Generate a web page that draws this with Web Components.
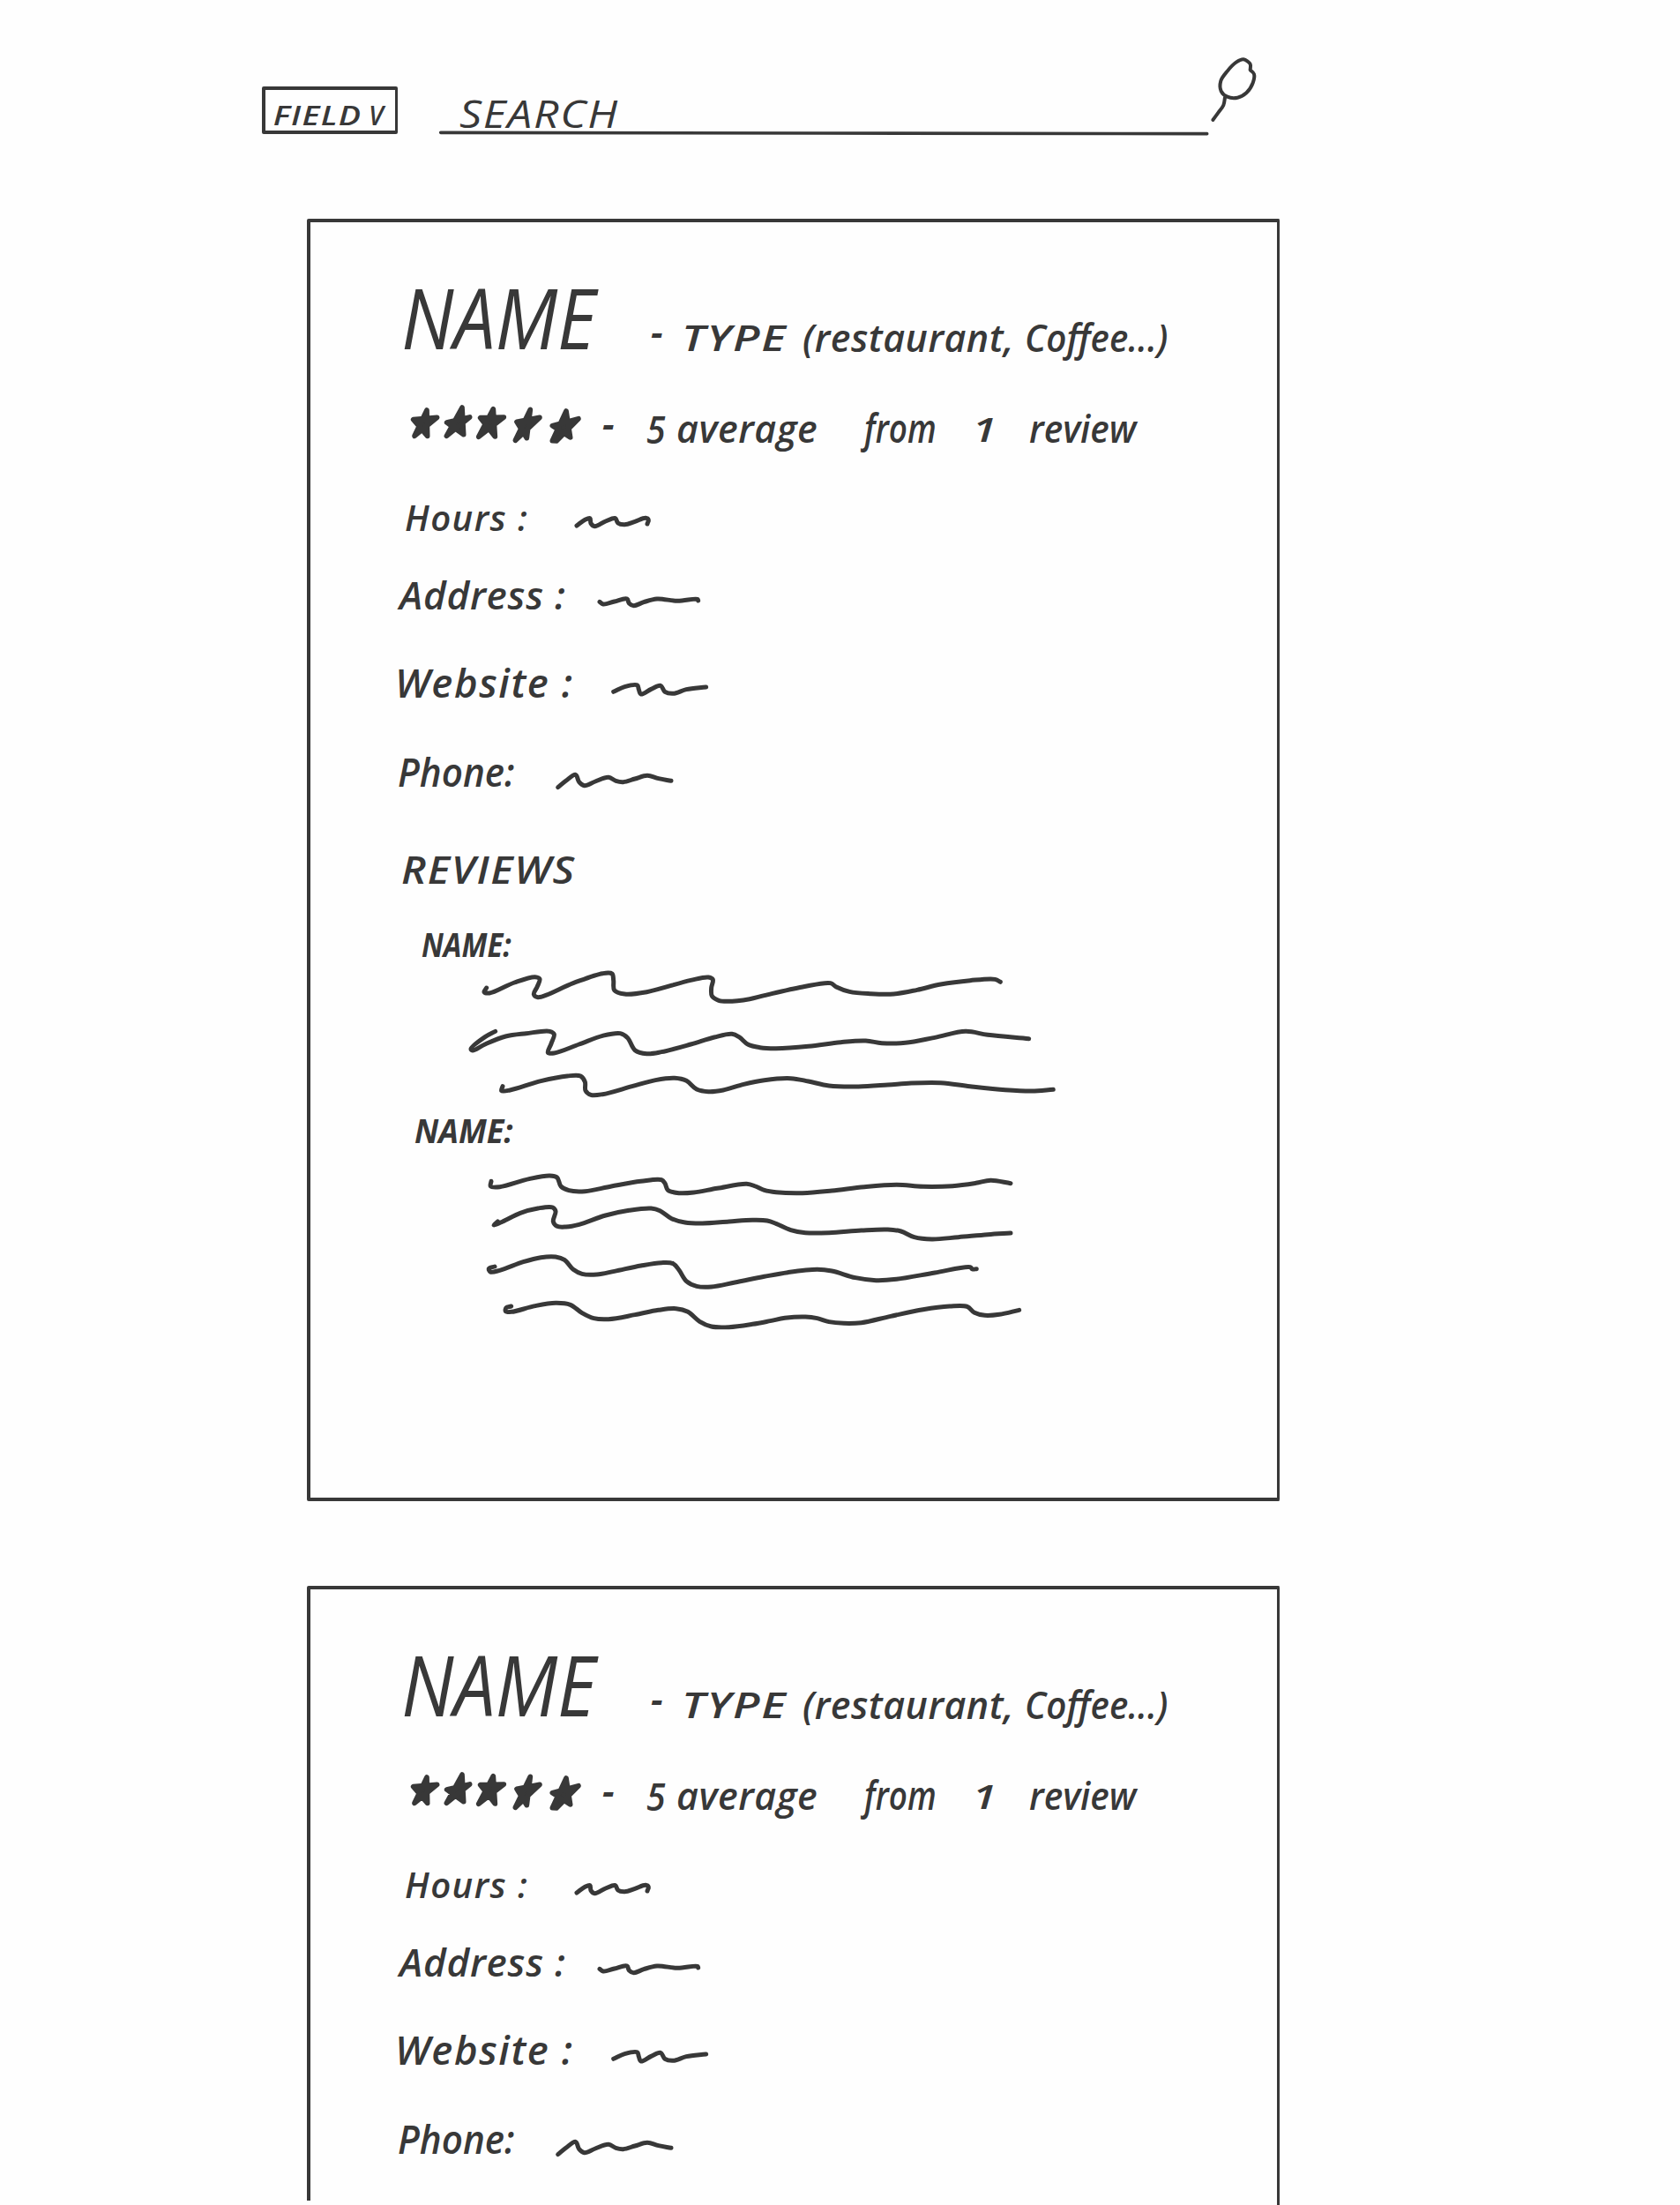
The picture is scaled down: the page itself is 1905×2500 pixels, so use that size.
<!DOCTYPE html>
<html lang="en">
<head>
<meta charset="utf-8">
<title>Places</title>
<style>
  html, body { margin: 0; background: #fefefe; }
  body { width: 1905px; height: 2500px; overflow: hidden; }
</style>
</head>
<body>
<sketch-page></sketch-page>
<script>
const INK = '#383838';
const BASE = 0.868; // baseline position inside a 1em line of Open Sans, nudged for the pen's overshoot

// Centripetal Catmull-Rom curve through a flat list of points.
function smooth(list) {
  const n = list.trim().split(/[\s,]+/).map(Number), p = [];
  for (let i = 0; i < n.length; i += 2) p.push([n[i], n[i + 1]]);
  const dist = (a, b) => Math.hypot(b[0] - a[0], b[1] - a[1]);
  // Handle that leaves b toward c, given the point a on the other side of b.
  const handle = (a, b, c) => {
    if (!a) return [b[0] + (c[0] - b[0]) / 3, b[1] + (c[1] - b[1]) / 3];
    const d1 = dist(a, b), d2 = dist(b, c), s1 = Math.sqrt(d1), s2 = Math.sqrt(d2);
    const k = 3 * s1 * (s1 + s2), m = 2 * d1 + 3 * s1 * s2 + d2;
    return [0, 1].map(j => (d1 * c[j] - d2 * a[j] + m * b[j]) / k);
  };
  let d = `M${p[0]}`;
  for (let i = 0; i < p.length - 1; i++) {
    d += `C${handle(p[i - 1], p[i], p[i + 1])} ${handle(p[i + 2], p[i + 1], p[i])} ${p[i + 1]}`;
  }
  return d;
}

const ctx = document.createElement('canvas').getContext('2d');

// One handwritten word, fitted to its ink width by a little tracking, then by scale.
class InkText extends HTMLElement {
  connectedCallback() {
    const fs = +this.getAttribute('size'), w = +this.getAttribute('w');
    const wt = this.getAttribute('weight') || 600, t = this.textContent;
    const root = this.attachShadow({ mode: 'open' });
    ctx.font = `italic ${wt} ${fs}px "Open Sans"`;
    const m = ctx.measureText(t);
    const ink = m.actualBoundingBoxLeft + m.actualBoundingBoxRight;
    const gaps = t.length - 1;
    const ls = gaps && ink < w ? Math.min((w - ink) / gaps, fs * 0.035) : 0;
    const k = w / (ink + ls * gaps);
    root.innerHTML = `<style>
      :host { display: block; flex: none; width: ${w}px; height: ${fs}px; }
      span { display: inline-block; white-space: pre; color: ${INK}; letter-spacing: ${ls}px;
        font-family: "Open Sans", sans-serif; font-style: italic; font-weight: ${wt};
        font-size: ${fs}px; line-height: 1; transform-origin: 0 0;
        transform: translateX(${m.actualBoundingBoxLeft * k}px) scaleX(${k}); }
    </style><span><slot></slot></span>`;
  }
}

// Pen strokes; coordinates are thirds of a pixel from the "from" origin.
class InkStroke extends HTMLElement {
  connectedCallback() {
    const [x, y, w, h] = this.getAttribute('box').split(' ').map(Number);
    const [ox, oy] = this.getAttribute('from').split(' ').map(Number);
    const kind = this.getAttribute('kind');
    const paths = this.getAttribute('points').split('|').map(s =>
      kind === 'star' ? `<path fill="${INK}" d="M${s}Z"/>` : `<path d="${smooth(s)}"/>`).join('');
    this.attachShadow({ mode: 'open' }).innerHTML = `<style>
      :host { display: block; flex: none; width: ${w}px; height: ${h}px; }
      svg { display: block; overflow: visible; }
    </style>
    <svg width="${w}" height="${h}" viewBox="${x} ${y} ${w} ${h}" fill="none" stroke="${INK}"
      stroke-width="${this.getAttribute('pen') || 14}" stroke-linecap="round" stroke-linejoin="round">
      <g transform="translate(${ox} ${oy}) scale(.33333)">${paths}</g></svg>`;
  }
}

// A horizontal run of words and strokes.
class InkRow extends HTMLElement {
  connectedCallback() {
    const r = this.row;
    let cur = 352;
    const html = r.items.map(i => {
      const box = i.box ? i.box : [i.x, i.base - BASE * i.size, i.w, i.size];
      const m = `style="margin-left:${box[0] - cur}px;margin-top:${(box[1] - r.top).toFixed(2)}px"`;
      cur = box[0] + box[2];
      return i.box
        ? `<ink-stroke ${m} kind="${i.kind || ''}" pen="${i.pen || 15}" box="${i.box.join(' ')}" from="${i.from}" points="${i.points}"></ink-stroke>`
        : `<ink-text ${m} w="${i.w}" size="${i.size}" weight="${i.weight || 600}">${i.t}</ink-text>`;
    }).join('');
    this.attachShadow({ mode: 'open' }).innerHTML = `<style>
      :host { display: flex; align-items: flex-start; height: ${r.bottom - r.top}px; }
    </style>${html}`;
  }
}

const T = (t, x, x2, base, size, weight) => ({ t, x, w: x2 - x, base, size, weight });
const FACTS = '430 550', R1 = '450 1040', R2 = '520 1310';

const ROWS = [
  { top: 252, bottom: 430, items: [
    T('NAME', 458, 679, 394, 95, 400),
    T('-', 738, 751, 391, 42, 700),
    T('TYPE', 777, 893, 398, 40),
    T('(restaurant,', 911, 1146, 398, 43),
    T('Coffee...)', 1164, 1323, 398, 43) ] },
  { top: 430, bottom: 540, items: [
    { kind: 'star', pen: 17, box: [464, 459, 196, 45], from: '430 300', points:
      '120 583L162 495 164 583 116 527 197 520|229 583L282 486 287 578 230 537 308 519|338 586L388 491 394 585 344 521 424 519|463 598L514 493 502 590 468 535 546 520|589 599L636 498 650 588 589 548 678 524L603 600' },
    T('-', 683, 696, 495, 42, 700),
    T('5', 734, 755, 502, 43),
    T('average', 769, 926, 501, 43),
    T('from', 976, 1060, 501, 45),
    T('1', 1108, 1127, 500, 37),
    T('review', 1168, 1291, 501, 43) ] },
  { top: 540, bottom: 630, items: [
    T('Hours :', 460, 597, 602, 40),
    { box: [652, 585, 88, 15], from: FACTS, points: '672 138 700 118 717 113 720 130 733 140 770 123 803 113 812 129 835 134 870 124 906 112 916 118 912 132' } ] },
  { top: 630, bottom: 720, items: [
    T('Address :', 450, 640, 690, 44),
    { box: [678, 676, 116, 13], from: FACTS, points: '750 397 762 405 800 396 843 387 850 402 866 410 900 398 945 387 1015 394 1083 388 1085 393' } ] },
  { top: 720, bottom: 820, items: [
    T('Website :', 452, 649, 790, 45),
    { box: [693, 774, 110, 16], from: FACTS, points: '797 703 835 686 878 681 883 695 890 711 925 694 957 682 972 703 1000 709 1045 695 1112 687' } ] },
  { top: 820, bottom: 930, items: [
    T('Phone:', 452, 583, 891, 46),
    { box: [630, 876, 134, 19], from: FACTS, points: '608 1028 635 1006 668 985 680 1010 698 1022 735 1008 780 994 805 1006 830 1010 870 999 912 988 950 998 993 1006' } ] },
  { top: 930, bottom: 1030, items: [ T('REVIEWS', 456, 652, 1001, 43) ] },
  { top: 1030, bottom: 1095, items: [ T('NAME:', 478, 580, 1084, 37, 700) ] },
  { top: 1095, bottom: 1250, items: [
    { box: [530, 1100, 668, 142], from: R1, points:
      '305 240 297 254 315 258 400 222 470 203 486 210 478 235 466 262 480 272 600 224 700 191 732 192 737 215 740 248 775 261 850 254 1000 214 1060 204 1075 212 1070 240 1072 268 1095 283 1125 286 1200 278 1250 266 1380 237 1475 224 1495 237 1540 253 1610 260 1690 261 1770 247 1850 228 1950 215 2035 211 2053 220' +
      '|335 388 300 407 252 448 258 453 300 432 370 405 440 395 520 388 535 398 525 430 514 460 535 462 620 432 700 403 760 395 785 410 810 452 850 464 900 458 1000 432 1080 408 1140 397 1165 408 1195 433 1235 443 1290 446 1400 439 1510 425 1595 420 1650 428 1730 427 1830 409 1935 388 2010 400 2150 413' +
      '|360 575 356 590 385 588 490 557 580 540 625 540 640 560 642 590 660 604 700 602 800 575 880 554 945 547 985 556 1020 585 1060 593 1110 588 1180 568 1250 554 1340 548 1400 558 1470 573 1570 576 1670 570 1750 564 1850 563 1950 575 2070 587 2160 591 2233 586' } ] },
  { top: 1250, bottom: 1310, items: [ T('NAME:', 470, 582, 1295, 37, 700) ] },
  { top: 1310, bottom: 1530, items: [
    { box: [552, 1330, 608, 178], from: R2, points:
      '111 88 109 105 140 107 240 80 310 69 335 75 348 105 375 119 430 122 520 105 620 88 690 83 702 95 712 118 750 128 800 126 880 112 980 97 1010 105 1040 118 1080 125 1170 128 1270 120 1380 107 1490 100 1580 106 1680 104 1760 94 1810 85 1878 95' +
      '|133 225 120 237 150 225 210 196 270 180 320 177 330 190 322 225 335 241 365 243 410 235 500 204 580 187 655 180 685 188 725 215 770 228 830 231 920 225 1000 220 1050 222 1080 232 1130 254 1180 263 1260 263 1370 255 1460 252 1505 258 1550 278 1610 285 1700 278 1800 269 1878 264' +
      '|123 378 103 385 108 396 140 391 220 362 280 347 330 345 360 355 390 388 420 403 470 405 530 394 620 375 690 365 730 368 750 390 775 428 810 445 860 447 940 432 1040 412 1120 398 1220 388 1270 393 1350 416 1420 425 1490 421 1620 399 1740 380 1748 387 1762 386' +
      '|179 513 162 518 160 530 180 532 260 512 330 502 380 508 420 536 460 554 510 557 600 542 680 526 740 521 780 532 820 565 860 582 920 584 1000 574 1060 563 1110 553 1180 549 1220 554 1260 566 1310 571 1370 569 1470 547 1580 524 1670 513 1730 514 1755 535 1790 544 1840 541 1907 526' } ] }
];

// A bordered card: left rule and content side by side, so the left rule can end early.
class PlaceCard extends HTMLElement {
  connectedCallback() {
    const cut = this.hasAttribute('cut');
    this.attachShadow({ mode: 'open' }).innerHTML = `<style>
      :host { display: flex; flex: none; box-sizing: border-box; width: 1103px; height: 1454px; overflow: hidden;
        border: solid ${INK}; border-width: 4px 3px 4px 0; border-radius: 2px; }
      :host([cut]) { height: 702px; border-bottom: 0; border-radius: 2px 2px 0 0; }
      .rule { width: 4px; height: 100%; background: ${INK}; flex: none; }
      :host([cut]) .rule { height: 693px; }
      .rows { display: flex; flex-direction: column; flex: 1; }
      .rows > * { flex: none; }
    </style><div class="rule"></div><div class="rows"></div>`;
    const box = this.shadowRoot.querySelector('.rows');
    for (const r of cut ? ROWS.slice(0, 6) : ROWS) {
      const el = document.createElement('ink-row');
      el.row = r;
      box.append(el);
    }
  }
}

class SearchBar extends HTMLElement {
  connectedCallback() {
    this.attachShadow({ mode: 'open' }).innerHTML = `<style>
      :host { display: flex; align-items: flex-start; height: 248px; padding-left: 297px; box-sizing: border-box; }
      .field { display: flex; box-sizing: border-box; width: 154px; height: 54px; margin-top: 98px; flex: none;
        border: solid ${INK}; border-width: 4px 3px 4px 4px; border-radius: 2px;
        padding: ${142 - 102 - BASE * 31}px 0 0 10px; gap: 12px; }
      .search { display: flex; flex-direction: column; width: 873px; margin: ${144 - BASE * 43}px 0 0 47px; flex: none; }
      .search ink-text { margin-left: 23px; }
      .search ink-stroke { margin-top: ${149 - 144 + BASE * 43 - 43}px; }
    </style>
    <div class="field"><ink-text w="97" size="31">FIELD</ink-text><ink-text w="18" size="31">V</ink-text></div>
    <div class="search">
      <ink-text w="180" size="43" weight="500">SEARCH</ink-text>
      <ink-stroke box="498 149 873 4" from="498 149" pen="11" points="5 4 2612 8"></ink-stroke>
    </div>
    <ink-stroke style="margin:65px 0 0 2px" box="1373 65 52 72" from="1250 40" pen="12"
      points="503 118 503 98 480 82 455 92 425 122 403 155 404 190 425 209 460 212 490 196 512 162 516 132 503 118|417 212 412 238 395 262 376 288"></ink-stroke>`;
  }
}

class SketchPage extends HTMLElement {
  connectedCallback() {
    this.attachShadow({ mode: 'open' }).innerHTML = `<style>
      :host { display: flex; flex-direction: column; width: 1905px; height: 2500px; overflow: hidden; }
      main { display: flex; flex-direction: column; gap: 96px; padding-left: 348px; }
    </style>
    <search-bar></search-bar>
    <main><place-card></place-card><place-card cut></place-card></main>`;
  }
}

customElements.define('ink-text', InkText);
customElements.define('ink-stroke', InkStroke);
customElements.define('ink-row', InkRow);
customElements.define('place-card', PlaceCard);
customElements.define('search-bar', SearchBar);
customElements.define('sketch-page', SketchPage);
</script>
</body>
</html>
